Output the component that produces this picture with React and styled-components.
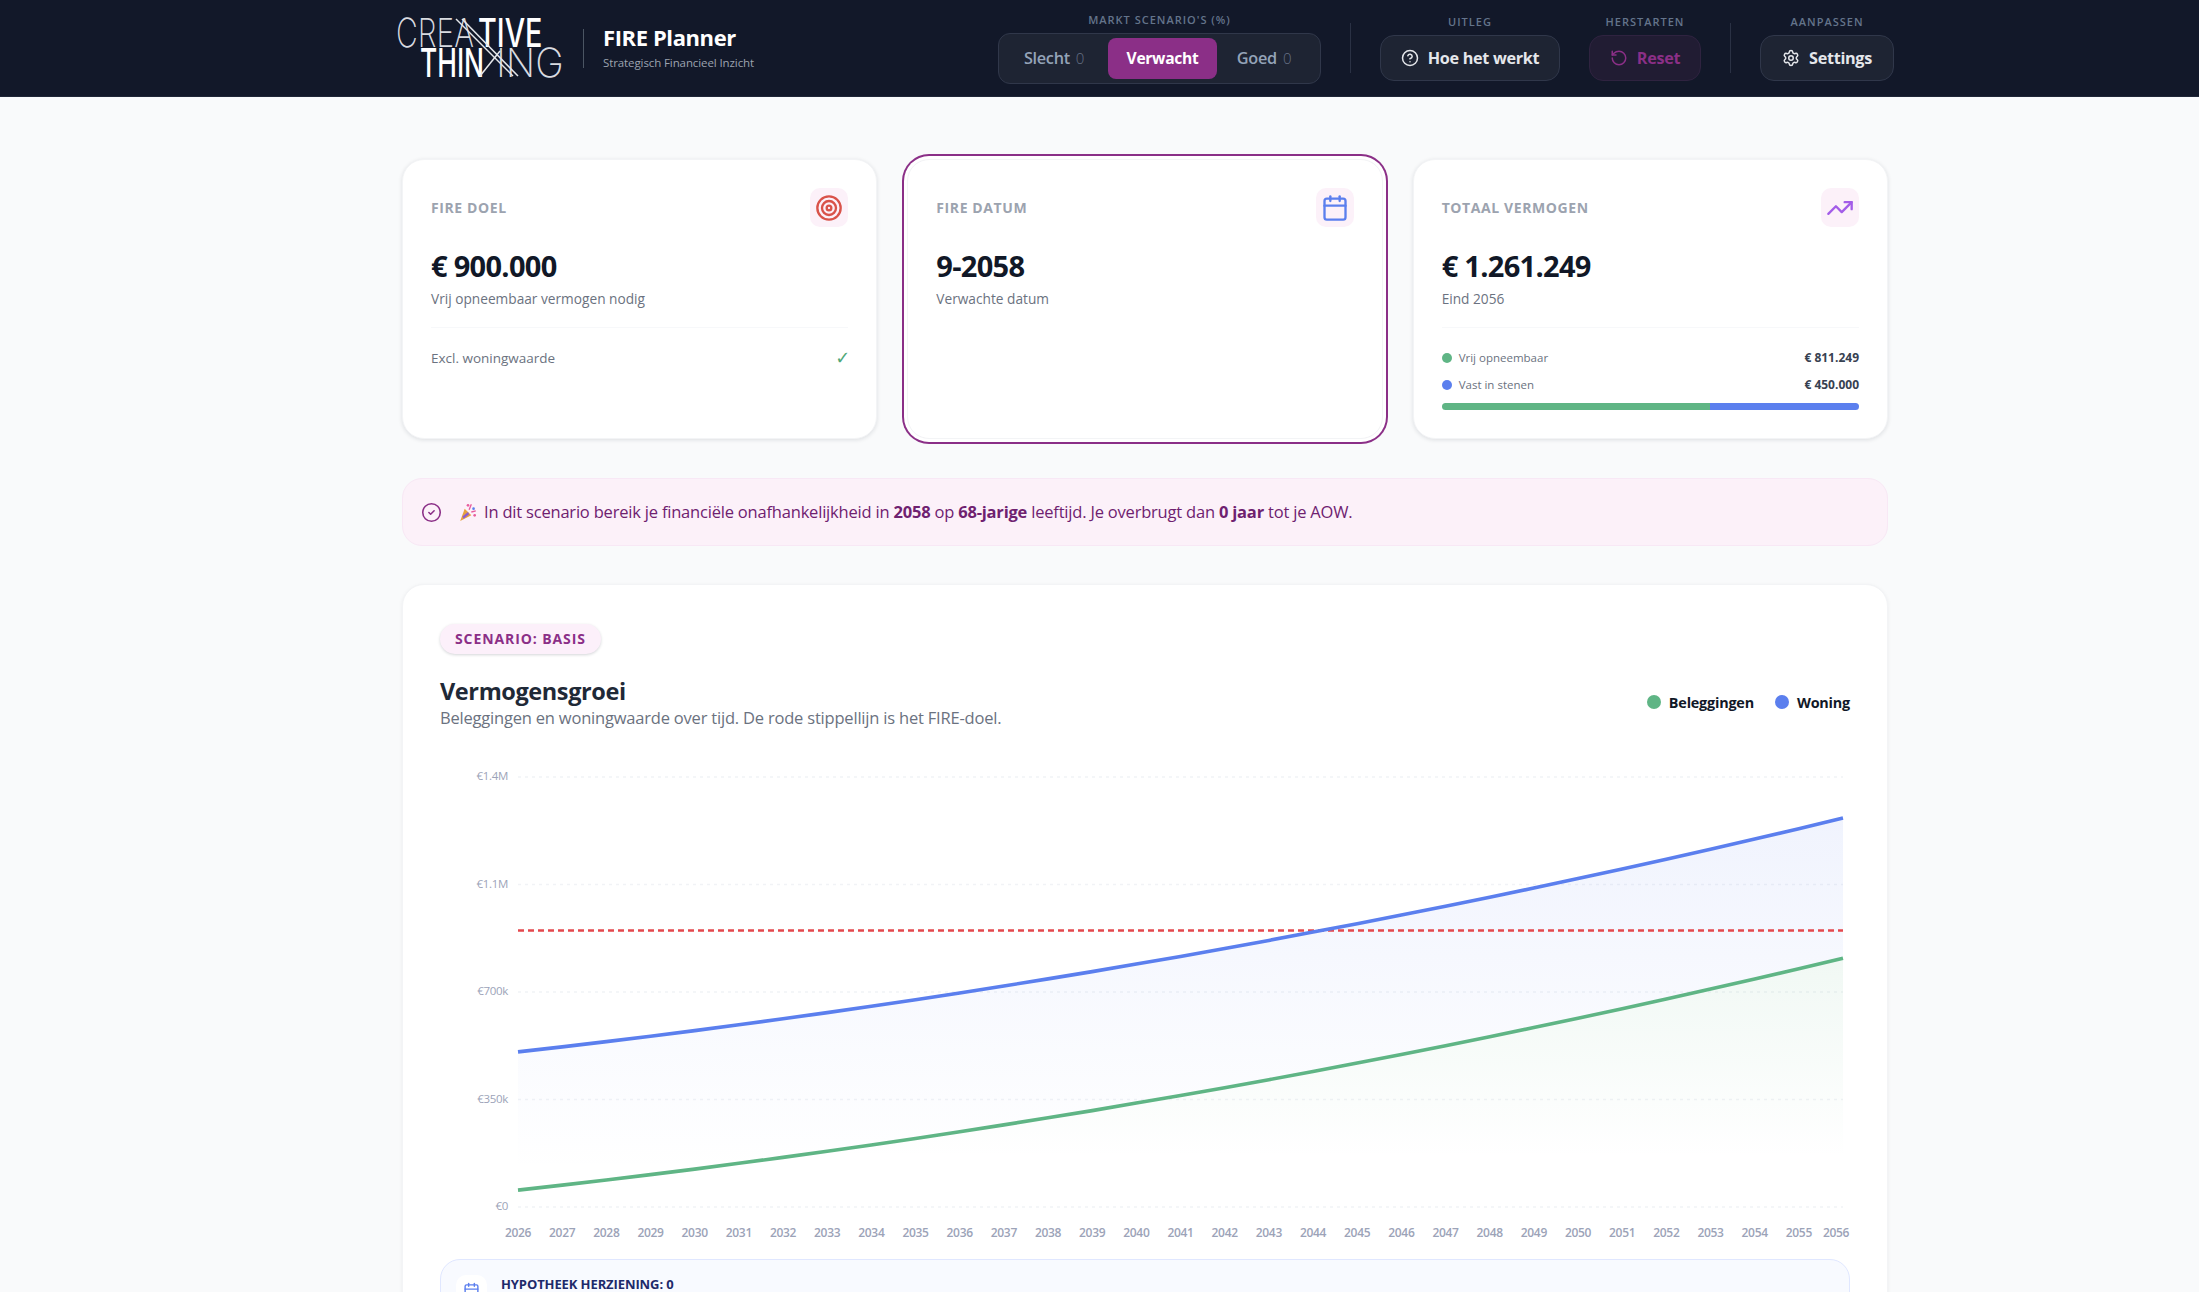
import React from 'react'
import styled, { createGlobalStyle } from 'styled-components'
import { Target, Calendar, TrendingUp, CircleHelp, RotateCcw, Settings, CircleCheck } from 'lucide-react'

const purple = '#8b2f87'
const green = '#5fb585'
const blue = '#5b7fee'

const GlobalStyle = createGlobalStyle`
  html, body { margin: 0; padding: 0; height: 100%; overflow: hidden; }
  body { background: #f9fafb; font-family: "Open Sans", "Noto Sans", sans-serif; color: #111827; }
  #root { height: 100%; overflow: hidden; }
  * { box-sizing: border-box; }
`

const Header = styled.header`
  height: 97px;
  background: #121829;
  border-bottom: 1px solid #1f2637;
  padding: 0 305px 0 396px;
  display: flex;
  align-items: center;
  justify-content: space-between;
`
const Brand = styled.div`
  display: flex;
  align-items: center;
  gap: 19px;
`
const LogoBox = styled.div`
  position: relative;
  width: 168px;
  height: 60px;
  padding-top: 3px;
  font-family: Inter, sans-serif;
`
const LogoRow = styled.div`
  display: flex;
  align-items: baseline;
  margin-top: ${({ $top }) => $top || 0}px;
  padding-left: ${({ $left }) => $left || 0}px;
`
const LogoWord = styled.span`
  display: inline-block;
  width: ${({ $w }) => $w}px;
  font-size: ${({ $size }) => $size}px;
  line-height: 1;
  font-weight: ${({ $bold }) => ($bold ? 500 : 200)};
  color: ${({ $bold }) => ($bold ? '#fff' : '#d9dbe0')};
  white-space: nowrap;
  transform: scaleY(${({ $stretch }) => $stretch});
  transform-origin: 0 86.4%;
`
const LogoStrokes = styled.svg`
  position: absolute;
  left: 0;
  top: 0;
`
const BrandDivider = styled.div`
  width: 1px;
  height: 39px;
  background: #4b5563;
`
const BrandText = styled.div`
  padding-bottom: 3px;
`
const BrandTitle = styled.div`
  font-size: 22px;
  line-height: 28px;
  font-weight: 700;
  color: #fff;
  letter-spacing: -0.4px;
`
const BrandSub = styled.div`
  font-size: 11.5px;
  line-height: 16px;
  margin-top: 4px;
  color: #9ca3af;
  letter-spacing: -0.1px;
`
const Controls = styled.div`
  display: flex;
  align-items: center;
  gap: 29px;
`
const Group = styled.div`
  display: flex;
  flex-direction: column;
  align-items: center;
  gap: 6px;
`
const GroupLabel = styled.div`
  font-size: 11px;
  line-height: 14px;
  font-weight: 600;
  letter-spacing: 1px;
  text-transform: uppercase;
  color: #64748b;
`
const Segment = styled.div`
  width: 323px;
  height: 51px;
  padding: 4px 5px;
  display: flex;
  align-items: stretch;
  background: #1e2433;
  border: 1px solid #30374a;
  border-radius: 12px;
`
const SegmentButton = styled.div`
  flex: 0 0 ${({ $w }) => $w}px;
  display: flex;
  align-items: center;
  justify-content: center;
  gap: 6px;
  padding-right: ${({ $active }) => ($active ? 0 : 4)}px;
  border-radius: 8px;
  font-size: ${({ $active }) => ($active ? 15.6 : 16.3)}px;
  font-weight: ${({ $active }) => ($active ? 700 : 600)};
  letter-spacing: -0.3px;
  color: ${({ $active }) => ($active ? '#fff' : '#94a3b8')};
  background: ${({ $active }) => ($active ? purple : 'transparent')};
`
const Zero = styled.span`
  font-size: 15px;
  font-weight: 300;
  color: #667085;
`
const Divider = styled.div`
  width: 1px;
  height: 50px;
  background: #2a3144;
`
const ActionButton = styled.div`
  height: 46px;
  width: ${({ $w }) => $w}px;
  display: flex;
  align-items: center;
  justify-content: center;
  gap: 9px;
  border-radius: 14px;
  font-size: 16.2px;
  font-weight: 700;
  letter-spacing: -0.3px;
  color: ${({ $reset }) => ($reset ? purple : '#e5e7eb')};
  background: ${({ $reset }) => ($reset ? '#211c33' : '#1e2433')};
  border: 1px solid ${({ $reset }) => ($reset ? '#2f2340' : '#30374a')};
`

const Main = styled.main`
  padding: 62px 311px 0 402px;
`
const Cards = styled.section`
  display: grid;
  grid-template-columns: repeat(3, 1fr);
  gap: 30px;
`
const Card = styled.div`
  height: 280px;
  padding: 28px;
  background: #fff;
  border: 1px solid #f3f4f6;
  border-radius: 22px;
  box-shadow: ${({ $active }) =>
    $active ? `0 0 0 3px #fff, 0 0 0 5px ${purple}` : '0 1px 4px rgba(17, 24, 39, 0.12)'};
`
const CardTop = styled.div`
  display: flex;
  align-items: center;
  justify-content: space-between;
`
const CardLabel = styled.div`
  font-size: 14px;
  font-weight: 700;
  letter-spacing: 0.6px;
  text-transform: uppercase;
  color: #9ca3af;
`
const IconBox = styled.div`
  width: 38px;
  height: 39px;
  border-radius: 10px;
  background: #fcf1f9;
  display: flex;
  align-items: center;
  justify-content: center;
  color: ${({ $color }) => $color};
`
const CardValue = styled.div`
  margin-top: 19px;
  font-size: 29px;
  line-height: 40px;
  font-weight: 700;
  letter-spacing: -0.7px;
  color: #111827;
`
const CardSub = styled.div`
  font-size: 13.7px;
  line-height: 20px;
  margin-top: 3px;
  color: #6b7280;
`
const CardFoot = styled.div`
  margin-top: 18px;
  padding-top: ${({ $split }) => ($split ? 16 : 18.5)}px;
  border-top: 1px solid #f7f8fa;
`
const FootRow = styled.div`
  display: flex;
  align-items: center;
  justify-content: space-between;
  height: 22px;
  font-size: 13.5px;
  color: #6b7280;
`
const Check = styled.span`
  font-family: "DejaVu Sans", sans-serif;
  font-size: 18px;
  margin-right: -2px;
  color: #4fa878;
`
const SplitRow = styled.div`
  display: flex;
  align-items: center;
  justify-content: space-between;
  height: 27px;
  font-size: 11.5px;
  color: #6b7280;
`
const SplitName = styled.span`
  display: flex;
  align-items: center;
  gap: 7px;
`
const Dot = styled.i`
  width: ${({ $size }) => $size}px;
  height: ${({ $size }) => $size}px;
  border-radius: 50%;
  background: ${({ $color }) => $color};
`
const SplitValue = styled.b`
  font-weight: 700;
  font-size: 12px;
  color: #374151;
`
const Bar = styled.div`
  display: flex;
  height: 7px;
  margin-top: 5px;
  border-radius: 4px;
  overflow: hidden;
`
const BarPart = styled.div`
  flex: ${({ $share }) => $share};
  background: ${({ $color }) => $color};
`

const Banner = styled.div`
  margin-top: 39px;
  height: 68px;
  padding: 0 18px;
  display: flex;
  align-items: center;
  background: #fcf1f9;
  border: 1px solid #f8e8f5;
  border-radius: 20px;
  color: #6f2170;
  font-size: 16.5px;
  letter-spacing: -0.2px;
`
const BannerText = styled.span`
  padding-bottom: 2px;
`
const BannerCheck = styled(CircleCheck)`
  color: ${purple};
  margin-right: 16px;
`
const Party = styled.svg`
  margin-right: 6px;
`

const ChartCard = styled.section`
  margin-top: 38px;
  height: 900px;
  padding: 39px 37px;
  background: #fff;
  border: 1px solid #f3f4f6;
  border-radius: 22px;
  box-shadow: 0 1px 4px rgba(17, 24, 39, 0.06);
`
const Badge = styled.div`
  display: inline-block;
  height: 30px;
  padding: 0 15px;
  line-height: 30px;
  border-radius: 15px;
  background: #fcf0fa;
  box-shadow: 0 1px 3px rgba(17, 24, 39, 0.18);
  color: ${purple};
  font-size: 14px;
  font-weight: 700;
  letter-spacing: 0.9px;
  text-transform: uppercase;
`
const ChartHead = styled.div`
  margin-top: 22px;
  display: flex;
  align-items: center;
  justify-content: space-between;
`
const ChartTitle = styled.h2`
  margin: 0;
  font-size: 23.5px;
  line-height: 30px;
  font-weight: 700;
  letter-spacing: -0.4px;
  color: #1f2937;
`
const ChartSub = styled.p`
  margin: 2px 0 0;
  font-size: 16.5px;
  line-height: 20px;
  letter-spacing: -0.2px;
  color: #6b7280;
`
const Legend = styled.div`
  display: flex;
  align-items: center;
  gap: 21px;
  font-size: 14.4px;
  font-weight: 700;
  letter-spacing: -0.2px;
  color: #111827;
`
const LegendItem = styled.span`
  display: flex;
  align-items: center;
  gap: 8px;
`
const ChartSvg = styled.svg`
  display: block;
  margin-top: 23px;
`
const InfoBox = styled.div`
  height: 120px;
  padding: 15px;
  display: flex;
  gap: 14px;
  background: #f8faff;
  border: 1px solid #e0e7ff;
  border-radius: 20px;
`
const InfoIcon = styled.div`
  width: 31px;
  height: 31px;
  border-radius: 10px;
  background: #fff;
  color: ${blue};
  display: flex;
  align-items: center;
  justify-content: center;
`
const InfoTitle = styled.div`
  font-size: 13px;
  line-height: 18px;
  font-weight: 700;
  text-transform: uppercase;
  letter-spacing: -0.1px;
  color: #1e2a6b;
`

// chart is drawn in local coordinates: the svg starts at x=440 on the page
const PLOT_L = 78
const PLOT_R = 1403
const BASE = 456
const yOf = (k) => BASE - (k / 350) * 107.5
const xOf = (i) => PLOT_L + (i / 30) * (PLOT_R - PLOT_L)
const years = Array.from({ length: 31 }, (_, i) => i)
const invest = (t) => 55 + 15.9 * t + 0.309 * t * t
const total = (t) => invest(t) + 450 + t * 0.2

const greenLine = years.map((t) => `${xOf(t).toFixed(1)},${yOf(invest(t)).toFixed(1)}`)
const blueLine = years.map((t) => `${xOf(t).toFixed(1)},${yOf(total(t)).toFixed(1)}`)
const greenArea = `M${greenLine.join(' L')} L${PLOT_R},${BASE} L${PLOT_L},${BASE} Z`
const blueArea = `M${blueLine.join(' L')} L${[...greenLine].reverse().join(' L')} Z`
const ticks = [
  ['€0', 0],
  ['€350k', 350],
  ['€700k', 700],
  ['€1.1M', 1050],
  ['€1.4M', 1400],
]

function GrowthChart() {
  return (
    <ChartSvg width="1412" height="508" viewBox="0 0 1412 508">
      <defs>
        <linearGradient id="fillBlue" x1="0" y1="0" x2="0" y2="1">
          <stop offset="0%" stopColor={blue} stopOpacity="0.09" />
          <stop offset="95%" stopColor={blue} stopOpacity="0" />
        </linearGradient>
        <linearGradient id="fillGreen" x1="0" y1="0" x2="0" y2="1">
          <stop offset="0%" stopColor={green} stopOpacity="0.09" />
          <stop offset="80%" stopColor={green} stopOpacity="0" />
        </linearGradient>
      </defs>
      {ticks.map(([label, v]) => (
        <g key={label}>
          <line x1={PLOT_L} x2={PLOT_R} y1={yOf(v)} y2={yOf(v)} stroke="#f1f3f6" strokeWidth="1.4" strokeDasharray="3 4" />
          <text x={PLOT_L - 10} y={yOf(v) + 3} textAnchor="end" fontSize="11.5" fill="#9ca3b8" letterSpacing="-0.3">
            {label}
          </text>
        </g>
      ))}
      <path d={blueArea} fill="url(#fillBlue)" />
      <path d={greenArea} fill="url(#fillGreen)" />
      <line x1={PLOT_L} x2={PLOT_R} y1={yOf(900)} y2={yOf(900)} stroke="#e5484d" strokeWidth="2.6" strokeDasharray="6 4" />
      <polyline points={blueLine.join(' ')} fill="none" stroke={blue} strokeWidth="3.6" />
      <polyline points={greenLine.join(' ')} fill="none" stroke={green} strokeWidth="3.6" />
      {years.map((t) => (
        <text
          key={t}
          x={t === 30 ? xOf(t) - 7 : xOf(t)}
          y={BASE + 30}
          textAnchor="middle"
          fontSize="12"
          fontWeight="600"
          fill="#9ca3b8"
          letterSpacing="-0.3"
        >
          {2026 + t}
        </text>
      ))}
    </ChartSvg>
  )
}

function Logo() {
  return (
    <LogoBox>
      <LogoRow>
        <LogoWord $w={82} $size={30} $stretch={1.333}>CREA</LogoWord>
        <LogoWord $w={64} $size={28.8} $stretch={1.39} $bold>TIVE</LogoWord>
      </LogoRow>
      <LogoRow $left={24} $top={-8}>
        <LogoWord $w={76} $size={26.4} $stretch={1.515} $bold>THIN</LogoWord>
        <LogoWord $w={68} $size={38.5} $stretch={1.04}>ING</LogoWord>
      </LogoRow>
      <LogoStrokes width="168" height="60" viewBox="0 0 168 60">
        <g stroke="#e5e7eb" strokeWidth="1.5">
          <line x1="60" y1="1" x2="117" y2="58" />
          <line x1="66" y1="1" x2="122" y2="58" />
          <line x1="84" y1="58" x2="104" y2="33" />
        </g>
      </LogoStrokes>
    </LogoBox>
  )
}

export default function App() {
  return (
    <>
      <GlobalStyle />
      <Header>
        <Brand>
          <Logo />
          <BrandDivider />
          <BrandText>
            <BrandTitle>FIRE Planner</BrandTitle>
            <BrandSub>Strategisch Financieel Inzicht</BrandSub>
          </BrandText>
        </Brand>
        <Controls>
          <Group>
            <GroupLabel>Markt scenario's (%)</GroupLabel>
            <Segment>
              <SegmentButton $w={104}>Slecht <Zero>0</Zero></SegmentButton>
              <SegmentButton $w={109} $active>Verwacht</SegmentButton>
              <SegmentButton $w={98}>Goed <Zero>0</Zero></SegmentButton>
            </Segment>
          </Group>
          <Divider />
          <Group>
            <GroupLabel>Uitleg</GroupLabel>
            <ActionButton $w={180}><CircleHelp size={18} />Hoe het werkt</ActionButton>
          </Group>
          <Group>
            <GroupLabel>Herstarten</GroupLabel>
            <ActionButton $w={112} $reset><RotateCcw size={18} />Reset</ActionButton>
          </Group>
          <Divider />
          <Group>
            <GroupLabel>Aanpassen</GroupLabel>
            <ActionButton $w={134}><Settings size={18} />Settings</ActionButton>
          </Group>
        </Controls>
      </Header>
      <Main>
        <Cards>
          <Card>
            <CardTop>
              <CardLabel>FIRE Doel</CardLabel>
              <IconBox $color="#d9534a"><Target size={28} strokeWidth={2} /></IconBox>
            </CardTop>
            <CardValue>€ 900.000</CardValue>
            <CardSub>Vrij opneembaar vermogen nodig</CardSub>
            <CardFoot>
              <FootRow>Excl. woningwaarde<Check>✓</Check></FootRow>
            </CardFoot>
          </Card>
          <Card $active>
            <CardTop>
              <CardLabel>FIRE Datum</CardLabel>
              <IconBox $color={blue}><Calendar size={28} strokeWidth={2} /></IconBox>
            </CardTop>
            <CardValue>9-2058</CardValue>
            <CardSub>Verwachte datum</CardSub>
          </Card>
          <Card>
            <CardTop>
              <CardLabel>Totaal Vermogen</CardLabel>
              <IconBox $color="#a35de8"><TrendingUp size={28} strokeWidth={2} /></IconBox>
            </CardTop>
            <CardValue>€ 1.261.249</CardValue>
            <CardSub>Eind 2056</CardSub>
            <CardFoot $split>
              <SplitRow>
                <SplitName><Dot $size={10} $color={green} />Vrij opneembaar</SplitName>
                <SplitValue>€ 811.249</SplitValue>
              </SplitRow>
              <SplitRow>
                <SplitName><Dot $size={10} $color={blue} />Vast in stenen</SplitName>
                <SplitValue>€ 450.000</SplitValue>
              </SplitRow>
              <Bar>
                <BarPart $color={green} $share={811249} />
                <BarPart $color={blue} $share={450000} />
              </Bar>
            </CardFoot>
          </Card>
        </Cards>
        <Banner>
          <BannerCheck size={21} strokeWidth={1.8} />
          <Party width="20" height="20" viewBox="0 0 18 18">
            <path d="M2 17 L6 6 L12 12 Z" fill="#e8a33d" />
            <path d="M4 13 L9 9 L10 11 L5 15 Z" fill="#8b5fd0" />
            <circle cx="9" cy="3" r="1.2" fill="#e85d9e" />
            <circle cx="14" cy="6" r="1.2" fill="#5b7fee" />
            <circle cx="15" cy="12" r="1.2" fill="#e85d9e" />
            <path d="M10 7 L12 2 M12 9 L16 8" stroke="#e85d9e" strokeWidth="1.2" />
          </Party>
          <BannerText>
            In dit scenario bereik je financiële onafhankelijkheid in <b>2058</b> op <b>68-jarige</b> leeftijd. Je overbrugt dan <b>0 jaar</b> tot je AOW.
          </BannerText>
        </Banner>
        <ChartCard>
          <Badge>Scenario: Basis</Badge>
          <ChartHead>
            <div>
              <ChartTitle>Vermogensgroei</ChartTitle>
              <ChartSub>Beleggingen en woningwaarde over tijd. De rode stippellijn is het FIRE-doel.</ChartSub>
            </div>
            <Legend>
              <LegendItem><Dot $size={14} $color={green} />Beleggingen</LegendItem>
              <LegendItem><Dot $size={14} $color={blue} />Woning</LegendItem>
            </Legend>
          </ChartHead>
          <GrowthChart />
          <InfoBox>
            <InfoIcon><Calendar size={17} /></InfoIcon>
            <InfoTitle>Hypotheek herziening: 0</InfoTitle>
          </InfoBox>
        </ChartCard>
      </Main>
    </>
  )
}
